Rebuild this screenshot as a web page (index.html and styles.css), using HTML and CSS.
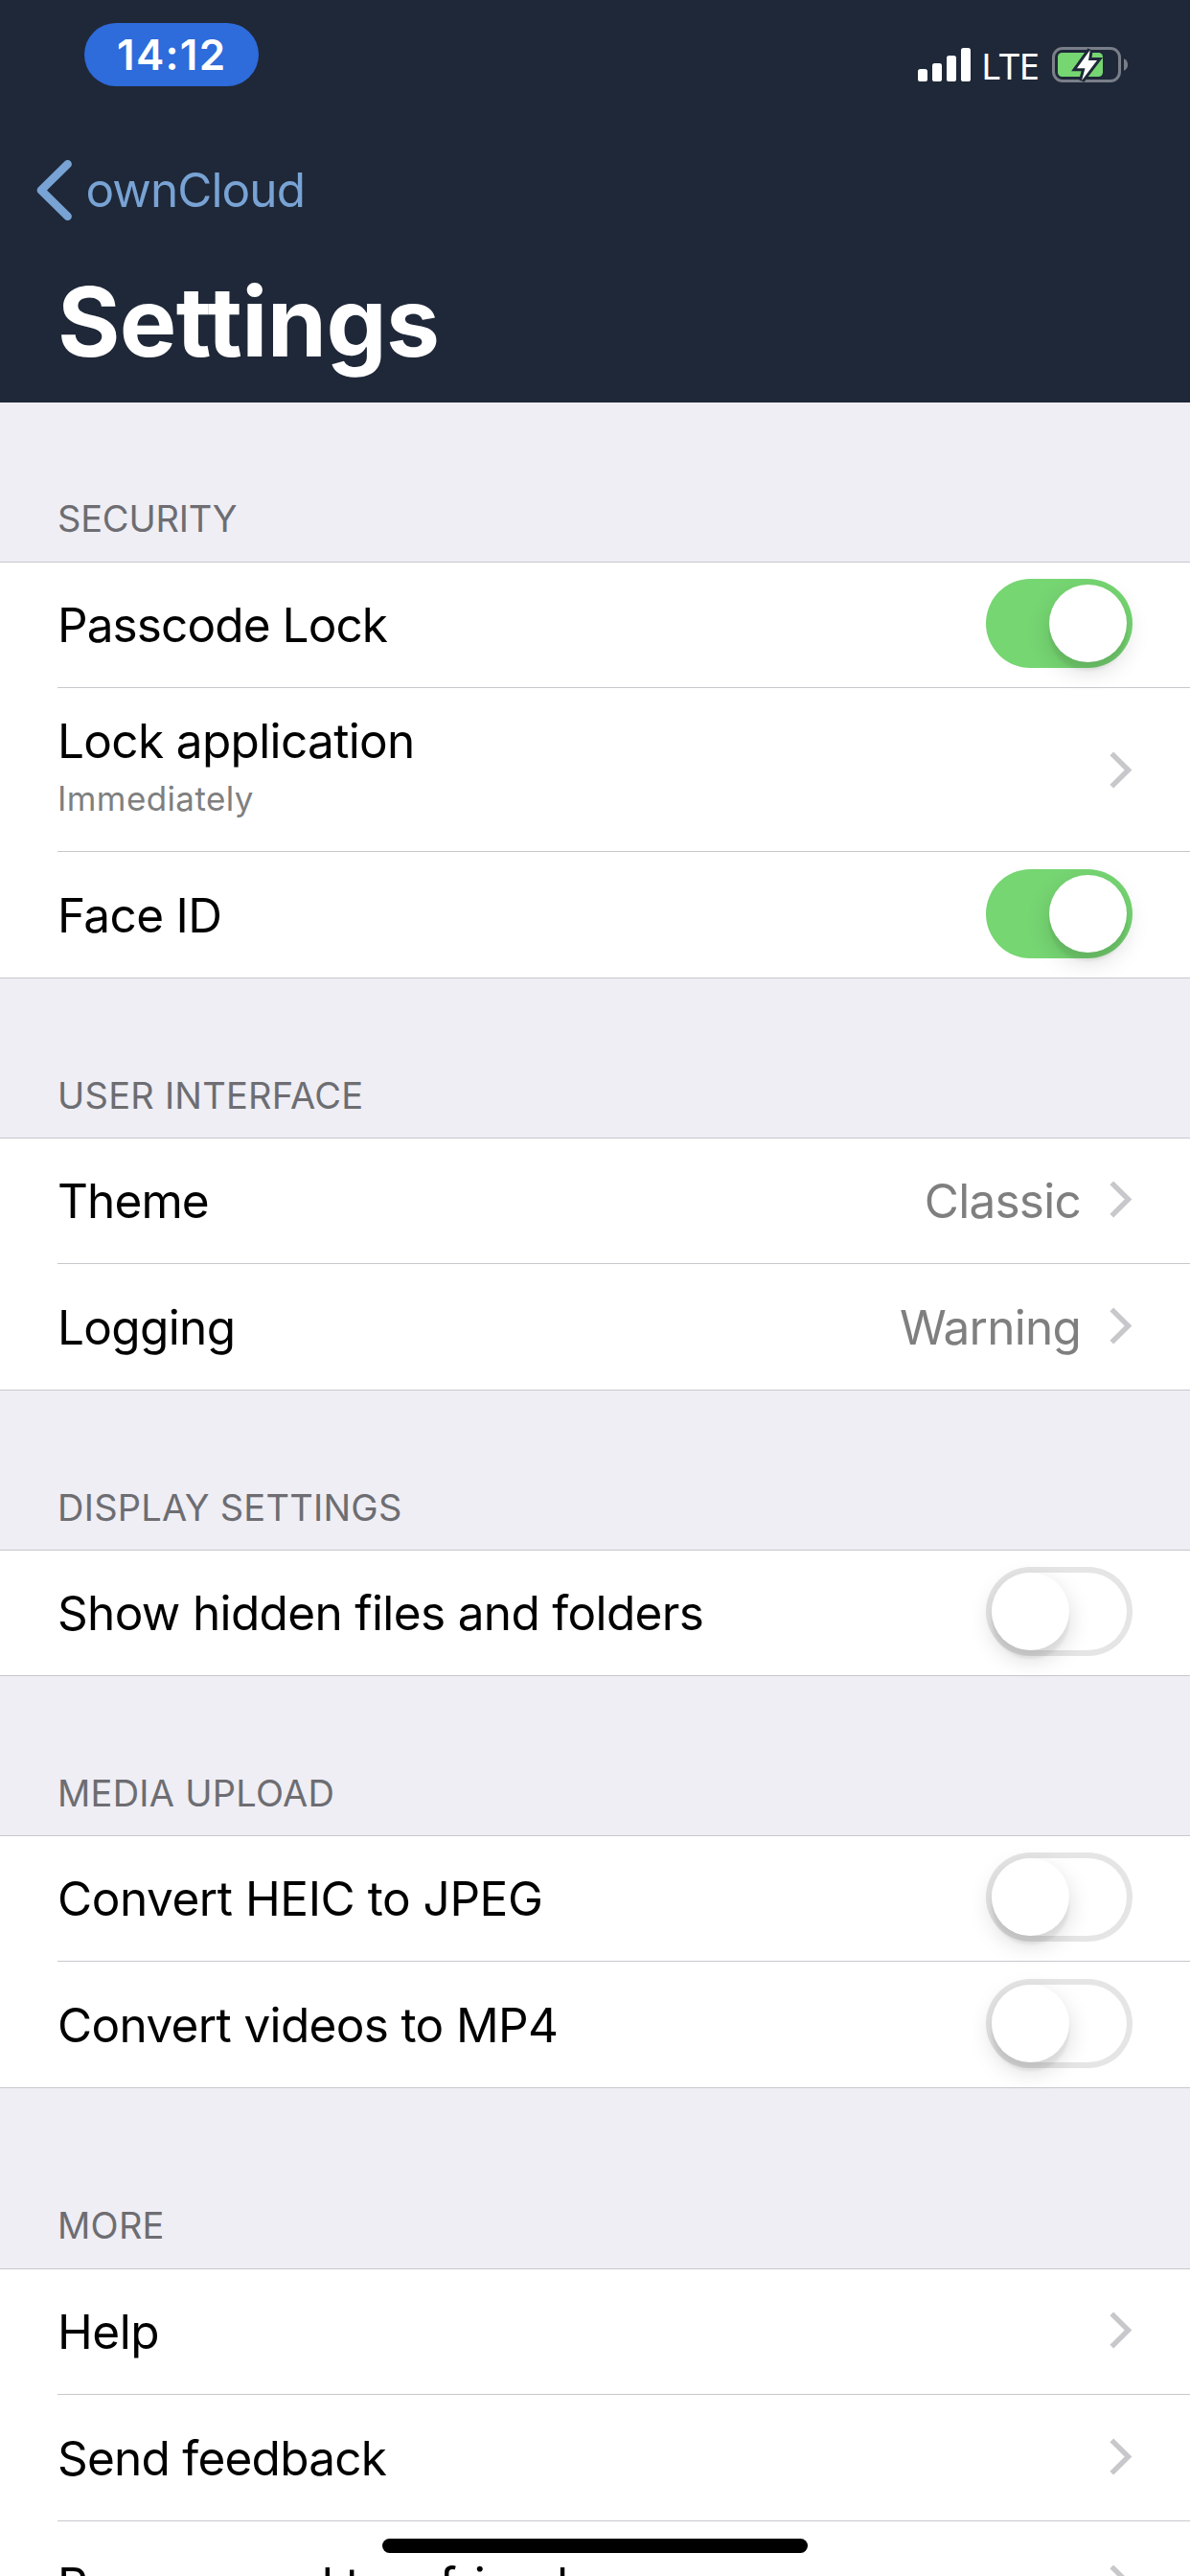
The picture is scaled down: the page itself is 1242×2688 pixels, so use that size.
FILE: index.html
```html
<!DOCTYPE html>
<html lang="en">
<head>
<meta charset="utf-8">
<title>Settings</title>
<link rel="stylesheet" href="styles.css">
</head>
<body>
<svg class="defs" width="0" height="0" aria-hidden="true">
  <symbol id="chevron" viewBox="0 0 24 39"><path d="M2.3 2.3 19.6 19.5 2.3 36.7" fill="none" stroke="#c7c7cc" stroke-width="5.4"/></symbol>
</svg>
<div class="screen">
  <header class="header">
    <div class="status">
      <div class="time">14:12</div>
      <div class="indicators">
        <svg class="signal" width="55" height="35" viewBox="0 0 55 35" fill="#fff">
          <rect x="0" y="22" width="10" height="13" rx="2.6"/>
          <rect x="15" y="16" width="10" height="19" rx="2.6"/>
          <rect x="30" y="8" width="10" height="27" rx="2.6"/>
          <rect x="45" y="0" width="10" height="35" rx="2.6"/>
        </svg>
        <span class="network">LTE</span>
        <svg class="battery" width="80" height="37" viewBox="0 0 80 37">
          <rect x="1.5" y="1.5" width="69" height="34" rx="9.5" fill="none" stroke="#797e89" stroke-width="3"/>
          <path d="M75 12.3Q79 14 79 18.5T75 24.7Z" fill="#797e89"/>
          <rect x="6" y="6" width="47" height="25" rx="4.5" fill="#76d672"/>
          <path d="M39.7 3.3 26 22.2H34.5L31 35 47 14H38Z" fill="#fff" stroke="#1f2838" stroke-width="6" paint-order="stroke"/>
        </svg>
      </div>
    </div>
    <nav class="nav">
      <svg class="back" width="38" height="64" viewBox="0 0 38 64"><path d="M32.6 5.2 4.9 32.5 32.6 59.8" fill="none" stroke="#78a3d4" stroke-width="8.6" stroke-linecap="round" stroke-linejoin="round"/></svg>
      <span class="back-label">ownCloud</span>
    </nav>
    <h1 class="title">Settings</h1>
  </header>

  <main>
    <h2 class="label label-first">SECURITY</h2>
    <section class="group">
      <div class="row"><span class="name tight">Passcode Lock</span><span class="switch on"><i class="knob"></i></span></div>
      <div class="row tall">
        <div class="stack"><span class="name">Lock application</span><span class="sub">Immediately</span></div>
        <svg class="chevron" width="24" height="39"><use href="#chevron"/></svg>
      </div>
      <div class="row"><span class="name">Face ID</span><span class="switch on"><i class="knob"></i></span></div>
    </section>

    <h2 class="label">USER INTERFACE</h2>
    <section class="group">
      <div class="row"><span class="name tight">Theme</span><span class="value">Classic</span><svg class="chevron" width="24" height="39"><use href="#chevron"/></svg></div>
      <div class="row"><span class="name">Logging</span><span class="value">Warning</span><svg class="chevron" width="24" height="39"><use href="#chevron"/></svg></div>
    </section>

    <h2 class="label">DISPLAY SETTINGS</h2>
    <section class="group">
      <div class="row"><span class="name">Show hidden files and folders</span><span class="switch"><i class="knob"></i></span></div>
    </section>

    <h2 class="label">MEDIA UPLOAD</h2>
    <section class="group">
      <div class="row"><span class="name loose">Convert HEIC to JPEG</span><span class="switch"><i class="knob"></i></span></div>
      <div class="row"><span class="name">Convert videos to MP4</span><span class="switch"><i class="knob"></i></span></div>
    </section>

    <h2 class="label label-last">MORE</h2>
    <section class="group">
      <div class="row"><span class="name loose">Help</span><svg class="chevron" width="24" height="39"><use href="#chevron"/></svg></div>
      <div class="row"><span class="name snug">Send feedback</span><svg class="chevron" width="24" height="39"><use href="#chevron"/></svg></div>
      <div class="row"><span class="name">Recommend to a friend</span><svg class="chevron" width="24" height="39"><use href="#chevron"/></svg></div>
    </section>
  </main>
  <div class="home-indicator"></div>
</div>
</body>
</html>
```
FILE: styles.css
```css
* { box-sizing: border-box; }
body { margin: 0; font-family: Inter, "Liberation Sans", sans-serif; background: #efeef4; }
.defs { position: absolute; }
.screen { position: relative; width: 1242px; height: 2688px; overflow: hidden; background: #efeef4; }

/* Header */
.header { display: flex; flex-direction: column; height: 420px; background: #1f2838; color: #fff; }
.status { display: flex; justify-content: space-between; align-items: flex-start; height: 132px; padding: 24px 64px 0 88px; }
.time {
  width: 182px; height: 66px; padding-left: 34px; border-radius: 33px; background: #2e6bdb;
  font-size: 44px; line-height: 66px; font-weight: 600; letter-spacing: 1.3px;
}
.indicators { display: flex; align-items: flex-start; padding-top: 25px; }
.signal { margin-top: 1px; }
.network { width: 57px; margin: 0 17px 0 11px; font-family: "Noto Sans", "Open Sans", sans-serif; font-size: 38.5px; line-height: 38px; letter-spacing: -0.7px; white-space: nowrap; }
.battery { display: block; }
.nav { display: flex; align-items: center; height: 132px; padding-left: 38px; }
.back { display: block; margin-right: 13.5px; }
.back-label { color: #78a3d4; font-size: 49.5px; line-height: 60px; letter-spacing: -0.93px; }
.title { margin: 0; padding-left: 60px; font-size: 100px; line-height: 144px; font-weight: 700; letter-spacing: -0.62px; }

/* Section labels */
.label {
  display: flex; align-items: flex-end; height: 166px; margin: 0; padding: 0 60px 21px;
  color: #6d6d72; font-size: 38px; line-height: 46px; font-weight: 400; letter-spacing: 0.25px;
}
.label-first { padding-bottom: 22px; letter-spacing: -0.2px; }
.label-last { height: 188px; padding-bottom: 22px; }

/* Grouped rows */
.group { background: #fff; box-shadow: inset 0 1px #c8c7cc; }
.row {
  display: flex; align-items: center; height: 132px; margin-left: 60px; padding: 1px 60px 0 0;
  border-bottom: 1px solid #c8c7cc; color: #000;
}
.row:last-child { margin-left: 0; padding-left: 60px; }
.tall { height: 171px; align-items: flex-start; padding-top: 25px; }
.name { flex: 1; font-size: 49.5px; line-height: 60px; letter-spacing: -0.65px; white-space: nowrap; }
.tight { letter-spacing: -0.9px; }
.snug { letter-spacing: -0.76px; }
.loose { letter-spacing: -0.45px; }
.stack { display: flex; flex: 1; flex-direction: column; gap: 9px; }
.stack .name { flex: none; }
.sub { color: #7f7f7f; font-size: 35px; line-height: 42px; letter-spacing: 0.39px; }
.value { margin-right: 30px; color: #7f7f7f; font-size: 49.5px; line-height: 60px; letter-spacing: -0.75px; }
.chevron { display: block; flex: none; margin-bottom: 3px; }
.tall .chevron { margin: 41px 0 0; }

/* Switches */
.switch {
  flex: none; width: 153px; height: 93px; margin-bottom: 3px; padding: 6px; border-radius: 47px;
  background: #fff; box-shadow: inset 0 0 0 6px #e5e5e5;
}
.on { background: #76d672; box-shadow: none; }
.knob {
  display: block; width: 81px; height: 81px; border-radius: 50%; background: #fff;
  box-shadow: 0 9px 24px rgba(0, 0, 0, .15), 0 9px 3px rgba(0, 0, 0, .06);
}
.on .knob { margin-left: 60px; }

.home-indicator { position: absolute; left: 399px; bottom: 24px; width: 444px; height: 15px; border-radius: 8px; background: #000; }
```
